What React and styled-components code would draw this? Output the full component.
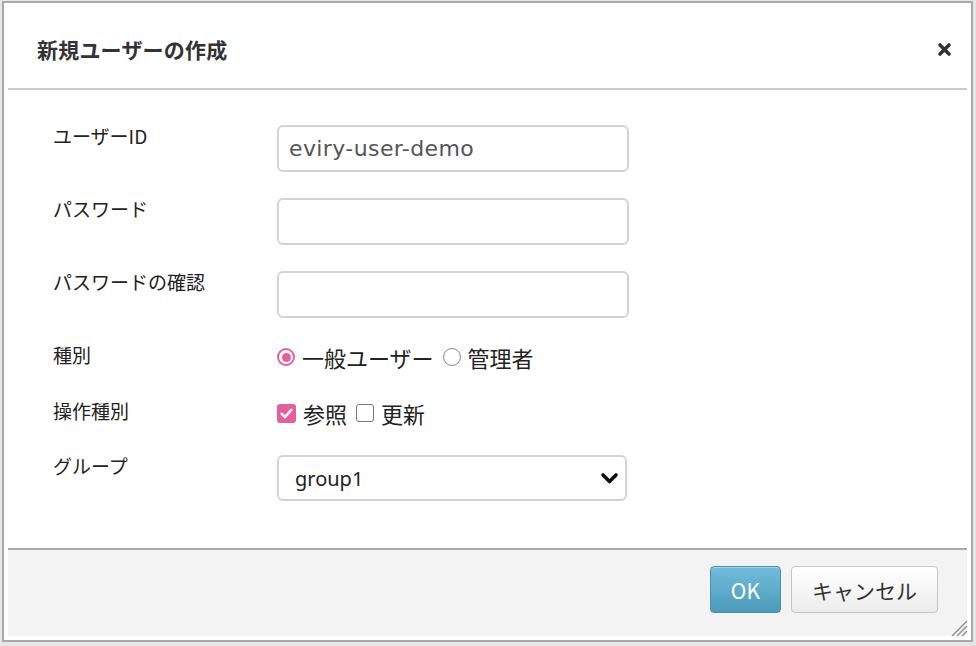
import React from "react";
import styled, { createGlobalStyle } from "styled-components";

const GlobalStyle = createGlobalStyle`
  html, body {
    margin: 0;
    background: #e6e6e6;
  }
  body {
    font-family: "Noto Sans CJK JP", "Noto Sans", sans-serif;
    color: #222;
  }
`;

const PINK = "#e5609b";

const Dialog = styled.div`
  position: relative;
  box-sizing: border-box;
  width: 971px;
  height: 641px;
  margin: 1px 0 0 2px;
  border: 2px solid #a9a9a9;
  padding: 4px;
  background: #fff;
  display: flex;
  flex-direction: column;
`;

const Header = styled.header`
  height: 83px;
  flex-shrink: 0;
  border-bottom: 2px solid #cacaca;
  display: flex;
  align-items: center;
  justify-content: space-between;
  padding: 3px 15px 0 29px;
  box-sizing: border-box;
`;

const Title = styled.h1`
  margin: 0;
  font-size: 21px;
  font-weight: 700;
  color: #333;
  letter-spacing: 0.2px;
`;

const CloseButton = styled.button`
  border: 0;
  background: none;
  padding: 0;
  display: flex;
  cursor: pointer;
`;

const Body = styled.div`
  flex: 1;
  padding: 35px 0 0 45px;
`;

const Row = styled.div`
  display: grid;
  grid-template-columns: 224px 352px;
  align-items: start;
  margin-bottom: ${({ $gap }) => $gap ?? 26}px;
`;

const Label = styled.div`
  font-size: 19px;
  line-height: 22px;
  color: #222;
`;

const TextInput = styled.input`
  box-sizing: border-box;
  width: 352px;
  height: 47px;
  border: 2px solid #d3d3d3;
  border-radius: 6px;
  padding: 0 10px;
  font-family: "DejaVu Sans", sans-serif;
  font-size: 22px;
  letter-spacing: 0.4px;
  color: #555;
  outline: none;
`;

const Options = styled.div`
  display: flex;
  align-items: center;
  height: 26px;
  font-size: 22px;
  line-height: 26px;
  color: #222;
`;

const Option = styled.label`
  display: inline-flex;
  align-items: center;
  gap: 7px;
  margin-right: 9px;
`;

const RadioMark = styled.span`
  box-sizing: border-box;
  width: 18px;
  height: 18px;
  border-radius: 50%;
  border: ${({ $checked }) => ($checked ? `2px solid ${PINK}` : "1.5px solid #888")};
  display: flex;
  align-items: center;
  justify-content: center;
  &::after {
    content: "";
    width: 9px;
    height: 9px;
    border-radius: 50%;
    background: ${({ $checked }) => ($checked ? PINK : "transparent")};
  }
`;

const CheckMark = styled.span`
  box-sizing: border-box;
  width: ${({ $checked }) => ($checked ? 19 : 18)}px;
  height: ${({ $checked }) => ($checked ? 19 : 18)}px;
  border-radius: 3px;
  border: ${({ $checked }) => ($checked ? "none" : "1.5px solid #777")};
  background: ${({ $checked }) => ($checked ? PINK : "#fff")};
  display: flex;
  align-items: center;
  justify-content: center;
`;

const SelectWrap = styled.div`
  position: relative;
  width: 350px;
`;

const Select = styled.select`
  appearance: none;
  box-sizing: border-box;
  width: 100%;
  height: 46px;
  border: 2px solid #d3d3d3;
  border-radius: 6px;
  background: #fff;
  padding: 0 16px;
  font-family: "Noto Sans", sans-serif;
  font-size: 20px;
  color: #222;
  outline: none;
`;

const Chevron = styled.svg`
  position: absolute;
  right: 8px;
  top: 17px;
  pointer-events: none;
`;

const Footer = styled.footer`
  flex-shrink: 0;
  box-sizing: border-box;
  height: 88px;
  border-top: 2px solid #aaa;
  background: #f3f3f3;
  display: flex;
  justify-content: flex-end;
  align-items: flex-start;
  gap: 10px;
  padding: 16px 29px 0 0;
`;

const Button = styled.button`
  height: 47px;
  padding: 0 20px;
  border-radius: 4px;
  font-family: "Noto Sans CJK JP", "Noto Sans", sans-serif;
  font-size: 21px;
  cursor: pointer;
  border: 1px solid ${({ $primary }) => ($primary ? "#4a90ad" : "#c6c6c6")};
  color: ${({ $primary }) => ($primary ? "#fff" : "#333")};
  background: ${({ $primary }) =>
    $primary
      ? "linear-gradient(#72bcdb, #4b9bbb)"
      : "linear-gradient(#ffffff, #ececec)"};
  box-shadow: inset 0 1px 0 rgba(255, 255, 255, 0.35);
`;

const Grip = styled.svg`
  position: absolute;
  right: 3px;
  bottom: 3px;
`;

function Radio({ checked, children }) {
  return (
    <Option>
      <RadioMark $checked={checked} />
      {children}
    </Option>
  );
}

function Check({ checked, children }) {
  return (
    <Option>
      <CheckMark $checked={checked}>
        {checked && (
          <svg width="13" height="11" viewBox="0 0 13 11">
            <path
              d="M1.8 5.8 L5 9 L11.2 2"
              fill="none"
              stroke="#fff"
              strokeWidth="2.6"
              strokeLinecap="round"
              strokeLinejoin="round"
            />
          </svg>
        )}
      </CheckMark>
      {children}
    </Option>
  );
}

export default function App() {
  return (
    <>
      <GlobalStyle />
      <Dialog>
        <Header>
          <Title>新規ユーザーの作成</Title>
          <CloseButton aria-label="close">
            <svg width="15" height="15" viewBox="0 0 15 15">
              <path
                d="M3 3 L12 12 M12 3 L3 12"
                stroke="#333"
                strokeWidth="3.6"
                strokeLinecap="round"
              />
            </svg>
          </CloseButton>
        </Header>

        <Body>
          <Row>
            <Label>ユーザーID</Label>
            <TextInput defaultValue="eviry-user-demo" />
          </Row>
          <Row>
            <Label>パスワード</Label>
            <TextInput type="password" />
          </Row>
          <Row>
            <Label>パスワードの確認</Label>
            <TextInput type="password" />
          </Row>
          <Row $gap={30}>
            <Label>種別</Label>
            <Options>
              <Radio checked>一般ユーザー</Radio>
              <Radio>管理者</Radio>
            </Options>
          </Row>
          <Row $gap={29}>
            <Label>操作種別</Label>
            <Options>
              <Check checked>参照</Check>
              <Check>更新</Check>
            </Options>
          </Row>
          <Row $gap={0}>
            <Label>グループ</Label>
            <SelectWrap>
              <Select defaultValue="group1">
                <option value="group1">group1</option>
              </Select>
              <Chevron width="19" height="13" viewBox="0 0 19 13">
                <path
                  d="M3 3 L9.5 9.5 L16 3"
                  fill="none"
                  stroke="#111"
                  strokeWidth="3.6"
                  strokeLinecap="round"
                  strokeLinejoin="round"
                />
              </Chevron>
            </SelectWrap>
          </Row>
        </Body>

        <Footer>
          <Button $primary>OK</Button>
          <Button>キャンセル</Button>
        </Footer>

        <Grip width="18" height="18" viewBox="0 0 18 18">
          <path
            d="M2 17 L17 2 M7 17 L17 7 M12 17 L17 12"
            stroke="#8a8a8a"
            strokeWidth="1.3"
          />
        </Grip>
      </Dialog>
    </>
  );
}
